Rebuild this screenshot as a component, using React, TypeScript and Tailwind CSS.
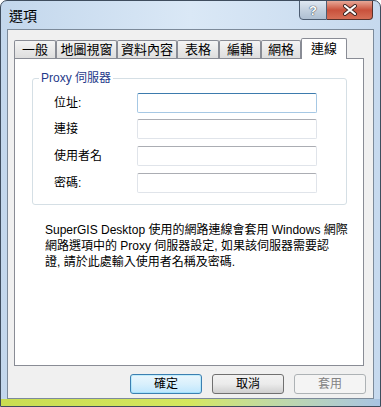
import React from 'react';

const font = { fontFamily: '"Liberation Sans", "Noto Sans CJK TC", sans-serif' };

const tabs = [
  { name: '一般', w: 'w-[42px]' },
  { name: '地圖視窗', w: 'w-[61px]' },
  { name: '資料內容', w: 'w-[60px]' },
  { name: '表格', w: 'w-[42px]' },
  { name: '編輯', w: 'w-[42px]' },
  { name: '網格', w: 'w-[40px]' },
];

const fields = [
  { label: '位址:', mt: '', focus: true },
  { label: '連接', mt: 'mt-[6px]', focus: false },
  { label: '使用者名', mt: 'mt-[7px]', focus: false },
  { label: '密碼:', mt: 'mt-[7px]', focus: false },
];

const App: React.FC = () => {
  return (
    <div
      className="w-[381px] h-[407px] flex flex-col border border-[#3f4d5e] rounded-t-[7px] bg-gradient-to-r from-[#c3d7ec] via-[#dae8f6] to-[#c6d9ee] overflow-hidden text-black"
      style={font}
    >
      {/* Title bar */}
      <div className="h-[28px] flex justify-between shrink-0">
        <div className="pl-[8px] pt-[7px] text-[14px] leading-[16px]">選項</div>
        <div className="flex self-start -mt-[1px] mr-[7px]">
          <div className="w-[28px] h-[20px] border border-[#4d5d72] rounded-bl-[4px] bg-gradient-to-b from-[#dfe8f2] via-[#c4d1df] to-[#aebfd2] flex items-center justify-center">
            <span className="text-[13px] font-bold leading-none text-white" style={{ textShadow: '0 0 1px #2c3b4e, 0 0 1px #2c3b4e' }}>?</span>
          </div>
          <div className="w-[46px] h-[20px] border border-l-0 border-[#58322c] rounded-br-[4px] bg-gradient-to-b from-[#e6a797] via-[#c9513c] to-[#d66f57] flex items-center justify-center">
            <svg width="16" height="12" viewBox="0 0 16 12">
              <path d="M3 2 L13 10 M13 2 L3 10" stroke="#3a2420" strokeWidth="4" strokeLinecap="round" />
              <path d="M3 2 L13 10 M13 2 L3 10" stroke="#ffffff" strokeWidth="2.2" strokeLinecap="round" />
            </svg>
          </div>
        </div>
      </div>

      {/* Client area */}
      <div className="flex-1 px-[6px] flex">
        <div className="flex-1 border border-[#7c8a9a] bg-[#f0f0f0] flex flex-col pl-[6px] pt-[7px]">
          {/* Tabs */}
          <div className="flex items-end h-[21px] relative z-10">
            {tabs.map((t) => (
              <div
                key={t.name}
                className={`${t.w} h-[18px] border border-b-0 border-[#898c95] rounded-t-[2px] bg-gradient-to-b from-[#f4f4f4] to-[#dedede] flex items-center justify-center text-[13px] leading-none`}
              >
                {t.name}
              </div>
            ))}
            <div className="w-[46px] h-[21px] -mb-[1px] border border-b-0 border-[#898c95] rounded-t-[2px] bg-white flex items-start justify-center pt-[3px] text-[13px] leading-none">
              連線
            </div>
          </div>

          {/* Tab panel */}
          <div className="w-[350px] h-[308px] border border-[#898c95] bg-white pt-[19px] pl-[17px]">
            <div className="w-[315px] h-[127px] border border-[#d5dfe5] rounded-[3px] relative pt-[14px] pl-[21px]">
              <div className="absolute -top-[8px] left-[6px] bg-white px-[2px] text-[12px] leading-[14px] text-[#1f3a8a]">
                Proxy 伺服器
              </div>
              {fields.map((f) => (
                <div key={f.label} className={`flex items-center ${f.mt}`}>
                  <div className="w-[83px] text-[12px] leading-none">{f.label}</div>
                  <div
                    className={`w-[180px] h-[20px] border rounded-[2px] bg-white ${
                      f.focus
                        ? 'border-[#a6c8e4] border-t-[#3d7bad]'
                        : 'border-[#e0e4ea] border-t-[#abadb3]'
                    }`}
                  />
                </div>
              ))}
            </div>

            <p className="mt-[17px] ml-[13px] text-[12px] leading-[16px]">
              SuperGIS Desktop 使用的網路連線會套用 Windows 網際
              <br />
              網路選項中的 Proxy 伺服器設定, 如果該伺服器需要認
              <br />
              證, 請於此處輸入使用者名稱及密碼.
            </p>
          </div>

          {/* Buttons */}
          <div className="flex gap-[10px] pl-[116px] mt-[8px]">
            <div className="w-[72px] h-[20px] border border-[#3c7fb1] rounded-[3px] bg-gradient-to-b from-[#eaf6fd] via-[#d9f0fc] to-[#bee6fd] flex items-center justify-center text-[12px] leading-none shadow-[inset_0_0_0_1px_#48d2fb40]">
              確定
            </div>
            <div className="w-[72px] h-[20px] border border-[#707070] rounded-[3px] bg-gradient-to-b from-[#f2f2f2] via-[#ebebeb] to-[#cfcfcf] flex items-center justify-center text-[12px] leading-none">
              取消
            </div>
            <div className="w-[72px] h-[20px] border border-[#adb2b5] rounded-[3px] bg-[#f4f4f4] flex items-center justify-center text-[12px] leading-none text-[#838383]">
              套用
            </div>
          </div>
        </div>
      </div>

      {/* Bottom frame strip */}
      <div className="h-[7px] shrink-0 bg-gradient-to-r from-[#c9dd52] via-[#d5e75e] to-[#a9c4e2]" />
    </div>
  );
};

export default App;
